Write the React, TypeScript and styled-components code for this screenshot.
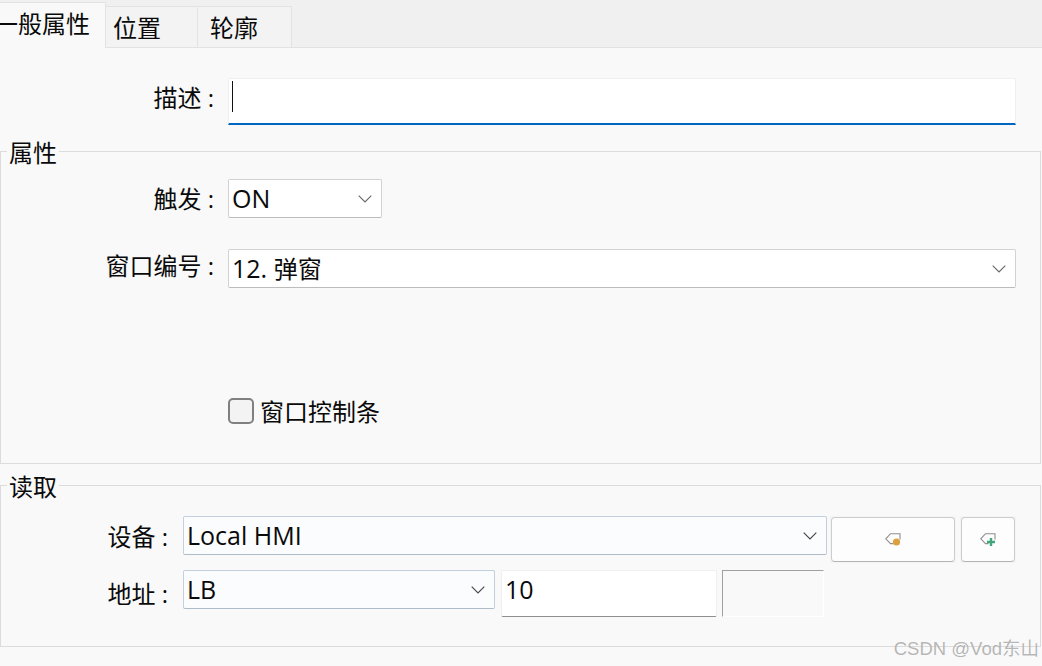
import React from "react";
import styled, { createGlobalStyle } from "styled-components";

const Global = createGlobalStyle`
  html, body { margin: 0; padding: 0; background: #f9f9f9; }
  #root { width: 1042px; height: 666px; overflow: hidden; position: relative; }
  * { box-sizing: border-box; }
`;

const Page = styled.div`
  width: 1042px;
  height: 666px;
  background: #f9f9f9;
  color: #0a0a0a;
  font-family: "Open Sans", "Noto Sans CJK SC", sans-serif;
  font-size: 24px;
  position: relative;
`;

const TabBar = styled.div`
  height: 48px;
  display: flex;
  align-items: flex-end;
  background: #f0f0f0;
  border-bottom: 1px solid #e2e2e2;
`;

const Tab = styled.div<{ $active?: boolean; $w: number; $pl?: number }>`
  width: ${(p) => p.$w}px;
  height: ${(p) => (p.$active ? 46 : 41)}px;
  margin-bottom: ${(p) => (p.$active ? -1 : 0)}px;
  background: ${(p) => (p.$active ? "#f9f9f9" : "#f3f3f3")};
  border: 1px solid #e2e2e2;
  border-left: none;
  border-bottom: none;
  border-top-right-radius: 2px;
  display: flex;
  padding-left: ${(p) => p.$pl ?? 0}px;
  padding-top: ${(p) => (p.$active ? 0 : 2)}px;
  align-items: ${(p) => (p.$active ? "flex-start" : "center")};
  line-height: 34px;
  overflow: hidden;
  white-space: nowrap;
`;

const ClippedLabel = styled.span`
  margin-left: -6px;
  margin-top: 4px;
`;

const DescRow = styled.div`
  display: flex;
  align-items: flex-start;
  padding: 30px 26px 0 2px;
  height: 89px;
`;

const Label = styled.div<{ $w: number; $h: number }>`
  width: ${(p) => p.$w}px;
  height: ${(p) => p.$h}px;
  line-height: ${(p) => p.$h}px;
  flex: none;
  text-align: right;
  white-space: pre;
`;

const DescInput = styled.div`
  flex: 1;
  height: 47px;
  margin-left: 14px;
  background: #ffffff;
  border: 1px solid #efefef;
  border-bottom: 2px solid #0067c0;
  border-radius: 2px 2px 0 0;
  padding: 2px 0 0 3px;
`;

const Caret = styled.div`
  width: 1px;
  height: 31px;
  background: #111;
`;

const Group = styled.fieldset`
  margin: 0 1px 0 0;
  padding: 14px 0 39px 0;
  border: 1px solid #dcdcdc;
  min-width: 0;
`;

const Legend = styled.legend`
  margin-left: 6px;
  padding: 0 2px;
  line-height: 32px;
  height: 28px;
  font-size: 24px;
`;

const ReadGroup = styled(Group)`
  margin-top: 7px;
  padding: 17px 0 29px 0;
`;

const Row = styled.div<{ $h: number }>`
  display: flex;
  align-items: flex-start;
  height: ${(p) => p.$h}px;
`;

const Select = styled.div<{ $w: number; $ml: number; $tinted?: boolean }>`
  width: ${(p) => p.$w}px;
  height: 39px;
  margin-left: ${(p) => p.$ml}px;
  flex: none;
  display: flex;
  align-items: center;
  justify-content: space-between;
  padding: 0 9px 0 3px;
  background: ${(p) => (p.$tinted ? "#fbfcfe" : "#ffffff")};
  border: 1px solid ${(p) => (p.$tinted ? "#c3cfdc" : "#d2d2d2")};
  border-bottom-color: ${(p) => (p.$tinted ? "#aebbc9" : "#bcbcbc")};
  border-radius: 2px;
  line-height: 37px;
  white-space: nowrap;
`;

const Latin = styled.span`
  font-size: 25px;
`;

const CheckRow = styled.label`
  display: flex;
  align-items: center;
  gap: 6px;
  height: 26px;
  margin: 110px 0 0 227px;
  line-height: 29px;
`;

const CheckBox = styled.span`
  width: 26px;
  height: 26px;
  background: #f3f3f3;
  border: 2px solid #808080;
  border-radius: 5px;
  flex: none;
`;

const ActionHalo = styled.div<{ $w: number; $ml: number }>`
  width: ${(p) => p.$w}px;
  height: 47px;
  margin-left: ${(p) => p.$ml}px;
  flex: none;
  padding: 1px;
  background: #f4f4f4;
`;

const ActionButton = styled.button`
  width: 100%;
  height: 45px;
  padding: 0;
  display: flex;
  align-items: center;
  justify-content: center;
  background: #fdfdfd;
  border: 1px solid #cdcdcd;
  border-bottom-color: #b5b5b5;
  border-radius: 4px;
`;

const AddressInput = styled.div`
  width: 216px;
  height: 47px;
  margin-left: 6px;
  flex: none;
  background: #ffffff;
  border: 1px solid #efefef;
  border-bottom: 1px solid #8e8e8e;
  border-radius: 2px;
  padding-left: 3px;
  line-height: 36px;
`;

const ReadonlyBox = styled.div`
  width: 102px;
  height: 47px;
  margin-left: 5px;
  flex: none;
  background: #f9f9f9;
  border: 1px solid #ffffff;
  border-top-color: #a0a0a0;
  border-left-color: #a0a0a0;
`;

const Watermark = styled.div`
  position: absolute;
  right: 3px;
  top: 637px;
  font-size: 18.5px;
  line-height: 24px;
  font-family: "Liberation Sans", "Noto Sans CJK SC", sans-serif;
  color: rgba(120, 120, 120, 0.55);
  white-space: nowrap;
  text-shadow: 0 0 1px rgba(255, 255, 255, 0.8);
`;

const Chevron = ({ dark }: { dark?: boolean }) => (
  <svg width="14" height="8" viewBox="0 0 14 8" fill="none">
    <path d="M0.7 0.7 L7 7 L13.3 0.7" stroke={dark ? "#444" : "#666"} strokeWidth="1.1" />
  </svg>
);

const TagIcon = ({ add }: { add?: boolean }) => (
  <svg width="16" height="14" viewBox="0 0 16 14" fill="none">
    <path d="M15 6.5 V0.7 H5.5 L0.8 5.8 L5.5 10.6 H8.5" stroke="#8f8f8f" strokeWidth="1.1" />
    {add ? (
      <path d="M11 5 V13 M7 9 H15" stroke="#3fa77a" strokeWidth="2.4" />
    ) : (
      <circle cx="11.5" cy="9" r="3.6" fill="#dca13f" />
    )}
  </svg>
);

export default function App() {
  return (
    <Page>
      <Global />
      <TabBar>
        <Tab $active $w={106}>
          <ClippedLabel>一般属性</ClippedLabel>
        </Tab>
        <Tab $w={92} $pl={7}>位置</Tab>
        <Tab $w={94} $pl={12}>轮廓</Tab>
      </TabBar>

      <DescRow>
        <Label $w={212} $h={40}>描述 :</Label>
        <DescInput>
          <Caret />
        </DescInput>
      </DescRow>

      <Group>
        <Legend>属性</Legend>
        <Row $h={70}>
          <Label $w={213} $h={39}>触发 :</Label>
          <Select $w={154} $ml={14}>
            <Latin>ON</Latin>
            <Chevron />
          </Select>
        </Row>
        <Row $h={39}>
          <Label $w={213} $h={34}>窗口编号 :</Label>
          <Select $w={788} $ml={14}>
            <span>
              <Latin>12. </Latin>弹窗
            </span>
            <Chevron />
          </Select>
        </Row>
        <CheckRow>
          <CheckBox />
          窗口控制条
        </CheckRow>
      </Group>

      <ReadGroup>
        <Legend>读取</Legend>
        <Row $h={54}>
          <Label $w={167} $h={42}>设备 :</Label>
          <Select $w={644} $ml={15} $tinted>
            <Latin>Local HMI</Latin>
            <Chevron dark />
          </Select>
          <ActionHalo $w={126} $ml={3}>
            <ActionButton>
              <TagIcon />
            </ActionButton>
          </ActionHalo>
          <ActionHalo $w={56} $ml={4}>
            <ActionButton>
              <TagIcon add />
            </ActionButton>
          </ActionHalo>
        </Row>
        <Row $h={47}>
          <Label $w={167} $h={47}>地址 :</Label>
          <Select $w={312} $ml={15} $tinted>
            <Latin>LB</Latin>
            <Chevron dark />
          </Select>
          <AddressInput>
            <Latin>10</Latin>
          </AddressInput>
          <ReadonlyBox />
        </Row>
      </ReadGroup>

      <Watermark>CSDN @Vod东山</Watermark>
    </Page>
  );
}
